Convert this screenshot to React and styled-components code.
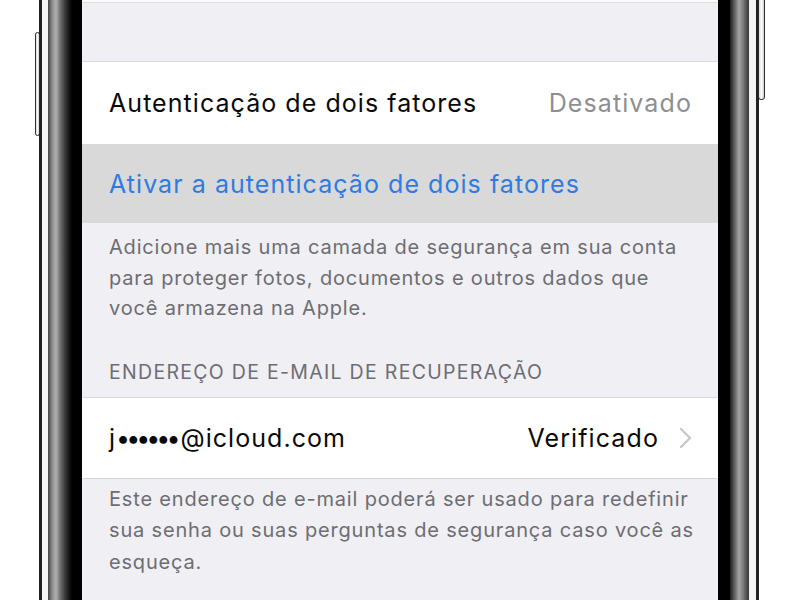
import styled, { createGlobalStyle } from "styled-components";

const GlobalStyle = createGlobalStyle`
  html, body {
    margin: 0;
    padding: 0;
    background: #ffffff;
    overflow: hidden;
  }
  * {
    box-sizing: border-box;
  }
`;

const Page = styled.div`
  width: 800px;
  height: 600px;
  display: flex;
  padding-left: 39px;
  background: #ffffff;
  font-family: Inter, "Noto Sans", "Liberation Sans", sans-serif;
`;

const Bezel = styled.div`
  position: relative;
  flex: none;
  width: ${({ $side }) => ($side === "left" ? "43px" : "41px")};
  height: 600px;
  background: ${({ $side }) =>
    $side === "left"
      ? `linear-gradient(to right,
          #1f1f1f 0 3px,
          #f4f4f4 3px 9px,
          #424242 9px,
          #8a8a8a 13px,
          #b2b2b2 17px,
          #727272 21px,
          #3a3a3a 26px,
          #101010 31px,
          #000 33px)`
      : `linear-gradient(to right,
          #000 0 12px,
          #1e1e1e 12px,
          #585858 16px,
          #a4a4a4 21px,
          #7c7c7c 25px,
          #3e3e3e 30px 31px,
          #f2f2f2 31px 38px,
          #1f1f1f 38px 41px)`};
`;

const SideButton = styled.div`
  position: absolute;
  top: ${({ $top }) => $top}px;
  height: ${({ $height }) => $height}px;
  ${({ $side }) => ($side === "left" ? "left: -4px;" : "right: -6px;")}
  width: ${({ $side }) => ($side === "left" ? "5px" : "7px")};
  background: linear-gradient(to right, #d9d9d9, #fafafa 50%, #cfcfcf);
  border: 1px solid #2a2a2a;
  border-radius: 3px;
`;

const Screen = styled.div`
  flex: none;
  width: 636px;
  height: 600px;
  display: flex;
  flex-direction: column;
  background: #efeff4;
  overflow: hidden;
`;

const TopGap = styled.div`
  flex: none;
  height: 62px;
  border-top: 2px solid #fbfbfb;
  border-bottom: 1px solid #dadade;
  background: linear-gradient(#dedee2 0 1px, #efeff4 1px);
`;

const Cell = styled.div`
  flex: none;
  height: ${({ $height }) => $height}px;
  display: flex;
  align-items: center;
  justify-content: space-between;
  padding: 0 26px 0 27px;
  background: ${({ $pressed }) => ($pressed ? "#d9d9d9" : "#ffffff")};
  border-bottom: ${({ $line }) => ($line ? "1px solid #d6d6da" : "none")};
  border-top: ${({ $topLine }) => ($topLine ? "1px solid #d6d6da" : "none")};
`;

const Label = styled.span`
  font-size: 25px;
  letter-spacing: 1.05px;
  color: ${({ $blue }) => ($blue ? "#2f7be2" : "#0a0a0a")};
  white-space: nowrap;
`;

const Dots = styled.span`
  letter-spacing: -4px;
  margin-right: 4px;
`;

const Detail = styled.span`
  display: flex;
  align-items: center;
  gap: 20px;
  font-size: 25px;
  letter-spacing: 1.1px;
  color: ${({ $muted }) => ($muted ? "#8e8e93" : "#0a0a0a")};
  white-space: nowrap;
`;

const Footer = styled.p`
  margin: 0;
  padding: ${({ $top }) => $top}px 18px 0 27px;
  font-size: 20px;
  letter-spacing: 0.82px;
  line-height: ${({ $lh }) => $lh}px;
  color: #6d6d72;
`;

const SectionHeader = styled.div`
  padding: 36px 27px 13px;
  font-size: 19.5px;
  letter-spacing: 1.3px;
  line-height: 24px;
  color: #6d6d72;
  white-space: nowrap;
`;

const Chevron = () => (
  <svg width="13" height="22" viewBox="0 0 13 22">
    <path
      d="M2 2 L11 11 L2 20"
      fill="none"
      stroke="#c7c7cc"
      strokeWidth="2.4"
      strokeLinecap="round"
      strokeLinejoin="round"
    />
  </svg>
);

export default function App() {
  return (
    <>
      <GlobalStyle />
      <Page>
        <Bezel $side="left">
          <SideButton $side="left" $top={32} $height={104} />
        </Bezel>

        <Screen>
          <TopGap />

          <Cell $height={82}>
            <Label>Autenticação de dois fatores</Label>
            <Detail $muted>Desativado</Detail>
          </Cell>

          <Cell $height={79} $pressed>
            <Label $blue>Ativar a autenticação de dois fatores</Label>
          </Cell>

          <Footer $top={9} $lh={30.5}>
            Adicione mais uma camada de segurança em sua conta para proteger
            fotos, documentos e outros dados que você armazena na Apple.
          </Footer>

          <SectionHeader>ENDEREÇO DE E-MAIL DE RECUPERAÇÃO</SectionHeader>

          <Cell $height={82} $line $topLine>
            <Label>
              j<Dots>••••••</Dots>@icloud.com
            </Label>
            <Detail>
              Verificado
              <Chevron />
            </Detail>
          </Cell>

          <Footer $top={5} $lh={31.5}>
            Este endereço de e-mail poderá ser usado para redefinir sua senha
            ou suas perguntas de segurança caso você as esqueça.
          </Footer>
        </Screen>

        <Bezel $side="right">
          <SideButton $side="right" $top={-10} $height={110} />
        </Bezel>
      </Page>
    </>
  );
}
